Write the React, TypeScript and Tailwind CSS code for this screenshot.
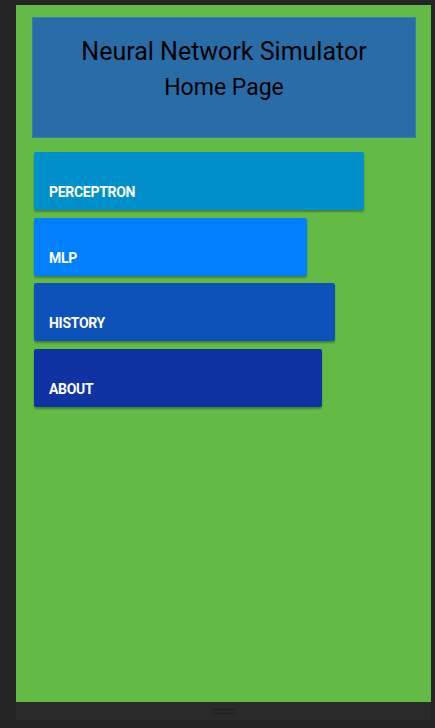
const BUTTONS = [
  { label: 'PERCEPTRON', width: 'w-[330px]', bg: 'bg-[#0090cb]' },
  { label: 'MLP', width: 'w-[273px]', bg: 'bg-[#0080ff]' },
  { label: 'HISTORY', width: 'w-[301px]', bg: 'bg-[#0d52b9]' },
  { label: 'ABOUT', width: 'w-[288px]', bg: 'bg-[#0f33a3]' },
];

export default function App() {
  return (
    <div className="h-screen bg-[#252525] pl-4 pr-1 pt-[5px] pb-2 flex flex-col font-['Roboto',sans-serif]">
      <div className="flex-1 bg-[#63bb45] flex flex-col">
        <div className="mt-3 ml-4 mr-[15px] h-[121px] bg-[#286ca8] border border-[#3a7db0] flex flex-col items-center pt-[18px] text-black">
          <div className="text-[25px] leading-[32px]">Neural Network Simulator</div>
          <div className="text-[23px] leading-[30px] mt-[5px]">Home Page</div>
        </div>
        <div className="mt-[14px] ml-[18px] flex flex-col gap-[7.5px]">
          {BUTTONS.map((b) => (
            <button
              key={b.label}
              className={`${b.width} ${b.bg} h-[58px] rounded-[2px] shadow-[0_2px_2px_rgba(0,0,0,0.3)] flex items-end pl-[15px] pb-[11px] text-white font-bold text-[14px] leading-none tracking-[-0.3px]`}
            >
              {b.label}
            </button>
          ))}
        </div>
      </div>
      <div className="h-[18px] bg-[#2a2a2a] flex items-center justify-center">
        <div className="w-[23px] h-[5px] border-y border-[#1e1e1e]" />
      </div>
    </div>
  );
}
